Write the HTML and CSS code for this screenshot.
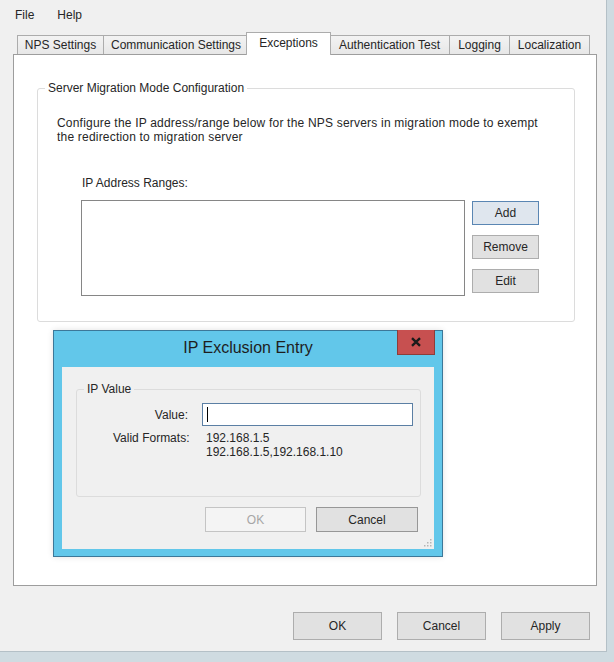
FILE: index.html
```html
<!DOCTYPE html>
<html lang="en">
<head>
<meta charset="utf-8">
<title>NPS Settings - Exceptions</title>
<link rel="stylesheet" href="styles.css">
</head>
<body>
<div class="screen">
  <div class="window">
    <div class="menubar"><span>File</span><span>Help</span></div>
    <div class="tabs">
      <div class="tab t-nps">NPS Settings</div>
      <div class="tab t-comm">Communication Settings</div>
      <div class="tab active">Exceptions</div>
      <div class="tab t-auth">Authentication Test</div>
      <div class="tab t-log">Logging</div>
      <div class="tab t-loc">Localization</div>
    </div>
    <div class="panel">
      <fieldset class="group main-group">
        <legend>Server Migration Mode Configuration</legend>
        <p class="desc">Configure the IP address/range below for the NPS servers in migration mode to exempt<br>the redirection to migration server</p>
        <div class="ranges-label">IP Address Ranges:</div>
        <div class="ranges">
          <div class="listbox"></div>
          <div class="side">
            <button class="btn btn-default">Add</button>
            <button class="btn">Remove</button>
            <button class="btn">Edit</button>
          </div>
        </div>
      </fieldset>
    </div>
    <div class="footer">
      <button class="btn">OK</button>
      <button class="btn">Cancel</button>
      <button class="btn">Apply</button>
    </div>
  </div>

  <div class="dialog">
    <div class="titlebar">
      <div class="title">IP Exclusion Entry</div>
      <div class="close">
        <svg width="12" height="10" viewBox="0 0 12 10"><path d="M2 1.2 L10 8.8 M10 1.2 L2 8.8" stroke="#1b1b1b" stroke-width="2.4" fill="none"/></svg>
      </div>
    </div>
    <div class="client">
      <fieldset class="group ip-group">
        <legend>IP Value</legend>
        <div class="form">
          <div class="lbl">Value:</div>
          <div class="input"><span class="caret"></span></div>
          <div class="lbl lbl-top">Valid Formats:</div>
          <div class="formats">192.168.1.5<br>192.168.1.5,192.168.1.10</div>
        </div>
      </fieldset>
      <div class="dlg-buttons">
        <button class="btn btn-disabled">OK</button>
        <button class="btn btn-cancel">Cancel</button>
      </div>
      <div class="grip-row">
        <svg width="8" height="8" viewBox="0 0 8 8">
          <rect x="6" y="0" width="1.5" height="1.5" fill="#b5b5b5"/>
          <rect x="6" y="3" width="1.5" height="1.5" fill="#b5b5b5"/>
          <rect x="3" y="3" width="1.5" height="1.5" fill="#b5b5b5"/>
          <rect x="6" y="6" width="1.5" height="1.5" fill="#b5b5b5"/>
          <rect x="3" y="6" width="1.5" height="1.5" fill="#b5b5b5"/>
          <rect x="0" y="6" width="1.5" height="1.5" fill="#b5b5b5"/>
        </svg>
      </div>
    </div>
  </div>
</div>
</body>
</html>
```

FILE: styles.css
```css
* { box-sizing: border-box; }

body {
  margin: 0;
  background: #cfdbe1;
  font-family: "Liberation Sans", Arial, sans-serif;
  font-size: 12px;
  color: #262626;
}

.screen {
  position: relative;
  width: 614px;
  height: 662px;
  overflow: hidden;
}

.window {
  width: 607px;
  height: 652px;
  background: #f0f0f0;
  border-right: 1px solid #b4c0c7;
  border-bottom: 1px solid #b4c0c7;
  display: flex;
  flex-direction: column;
}

.menubar {
  height: 32px;
  padding: 8px 0 0 15px;
  display: flex;
  gap: 23px;
  line-height: 14px;
}

.tabs {
  display: flex;
  align-items: flex-end;
  height: 22px;
  margin-left: 17px;
}

.tab {
  height: 19px;
  border-top: 1px solid #acacac;
  border-left: 1px solid #acacac;
  background: linear-gradient(#f3f3f3, #e7e7e7);
  line-height: 18px;
  text-align: center;
  white-space: nowrap;
}

.t-nps { width: 86px; }
.t-comm { width: 145px; }
.t-auth { width: 120px; }
.t-log { width: 60px; }
.t-loc { width: 81px; border-right: 1px solid #acacac; }

.tab.active {
  width: 85px;
  height: 23px;
  margin: 0 -2px -1px -2px;
  padding-top: 1px;
  background: #ffffff;
  border-right: 1px solid #acacac;
  position: relative;
  z-index: 1;
}

.panel {
  margin-left: 13px;
  width: 584px;
  height: 532px;
  border: 1px solid #9d9d9d;
  background: #ffffff;
}

.group {
  border: 1px solid #dcdcdc;
  border-radius: 3px;
  min-width: 0;
}

.group legend {
  margin-left: 7px;
  padding: 0 3px;
  line-height: 14px;
}

.main-group {
  margin: 26px 0 0 23px;
  padding: 0 0 25px 0;
  width: 538px;
}

.desc {
  margin: 21px 0 0 19px;
  line-height: 14px;
  letter-spacing: 0.2px;
  white-space: nowrap;
}

.ranges-label {
  margin: 32px 0 0 44px;
  line-height: 14px;
}

.ranges {
  display: flex;
  align-items: flex-start;
  gap: 7px;
  margin: 10px 0 0 43px;
}

.listbox {
  width: 384px;
  height: 96px;
  border: 1px solid #868686;
  background: #ffffff;
}

.side {
  display: flex;
  flex-direction: column;
  gap: 10px;
  padding-top: 1px;
}

.btn {
  font: inherit;
  color: #262626;
  background: #e1e1e1;
  border: 1px solid #adadad;
  padding: 0;
  margin: 0;
}

.side .btn {
  width: 67px;
  height: 24px;
}

.btn-default {
  background: #dfe6ee;
  border-color: #5a86b3;
}

.footer {
  display: flex;
  justify-content: flex-end;
  gap: 15px;
  margin-top: 26px;
  padding-right: 16px;
}

.footer .btn {
  width: 89px;
  height: 28px;
}

/* dialog window floating over the main window */
.dialog {
  position: absolute;
  left: 53px;
  top: 330px;
  width: 390px;
  height: 227px;
  background: #62c7ea;
  border: 1px solid #3c7899;
  padding: 0 8px 7px;
  display: flex;
  flex-direction: column;
  box-shadow: 0 0 6px rgba(0, 0, 0, 0.12);
}

.titlebar {
  height: 36px;
  display: grid;
  grid-template-columns: 1fr auto 1fr;
  align-items: start;
}

.title {
  grid-column: 2;
  margin-top: 8px;
  font-size: 16px;
  line-height: 18px;
  color: #1e1e1e;
  white-space: nowrap;
}

.close {
  grid-column: 3;
  justify-self: end;
  width: 38px;
  height: 25px;
  margin: -1px -1px 0 0;
  background: #c75050;
  border: 1px solid #8d3d39;
  border-top: none;
  display: flex;
  align-items: center;
  justify-content: center;
}

.client {
  flex: 1;
  background: #f0f0f0;
  display: flex;
  flex-direction: column;
}

.ip-group {
  margin: 15px 13px 0 14px;
  padding: 0 0 37px 0;
}

.form {
  display: grid;
  grid-template-columns: 75px 211px;
  column-gap: 14px;
  row-gap: 5px;
  align-items: center;
  margin: 7px 0 0 36px;
}

.lbl {
  text-align: right;
  line-height: 14px;
  white-space: nowrap;
}

.lbl-top { align-self: start; }

.input {
  height: 23px;
  border: 1px solid #5b7fa4;
  background: #ffffff;
  display: flex;
  align-items: center;
  padding-left: 4px;
}

.caret {
  width: 1px;
  height: 15px;
  background: #000000;
}

.formats {
  line-height: 14px;
  padding-left: 4px;
  white-space: nowrap;
}

.dlg-buttons {
  display: flex;
  justify-content: flex-end;
  gap: 10px;
  margin-top: 10px;
  padding-right: 16px;
}

.dlg-buttons .btn {
  height: 25px;
}

.btn-disabled {
  width: 101px;
  background: #f4f4f4;
  border-color: #c4c4c4;
  color: #a6a6a6;
}

.btn-cancel {
  width: 102px;
  border-color: #979797;
}

.grip-row {
  margin-top: auto;
  display: flex;
  justify-content: flex-end;
  padding: 0 2px 2px 0;
}

.grip-row svg { display: block; }
```
